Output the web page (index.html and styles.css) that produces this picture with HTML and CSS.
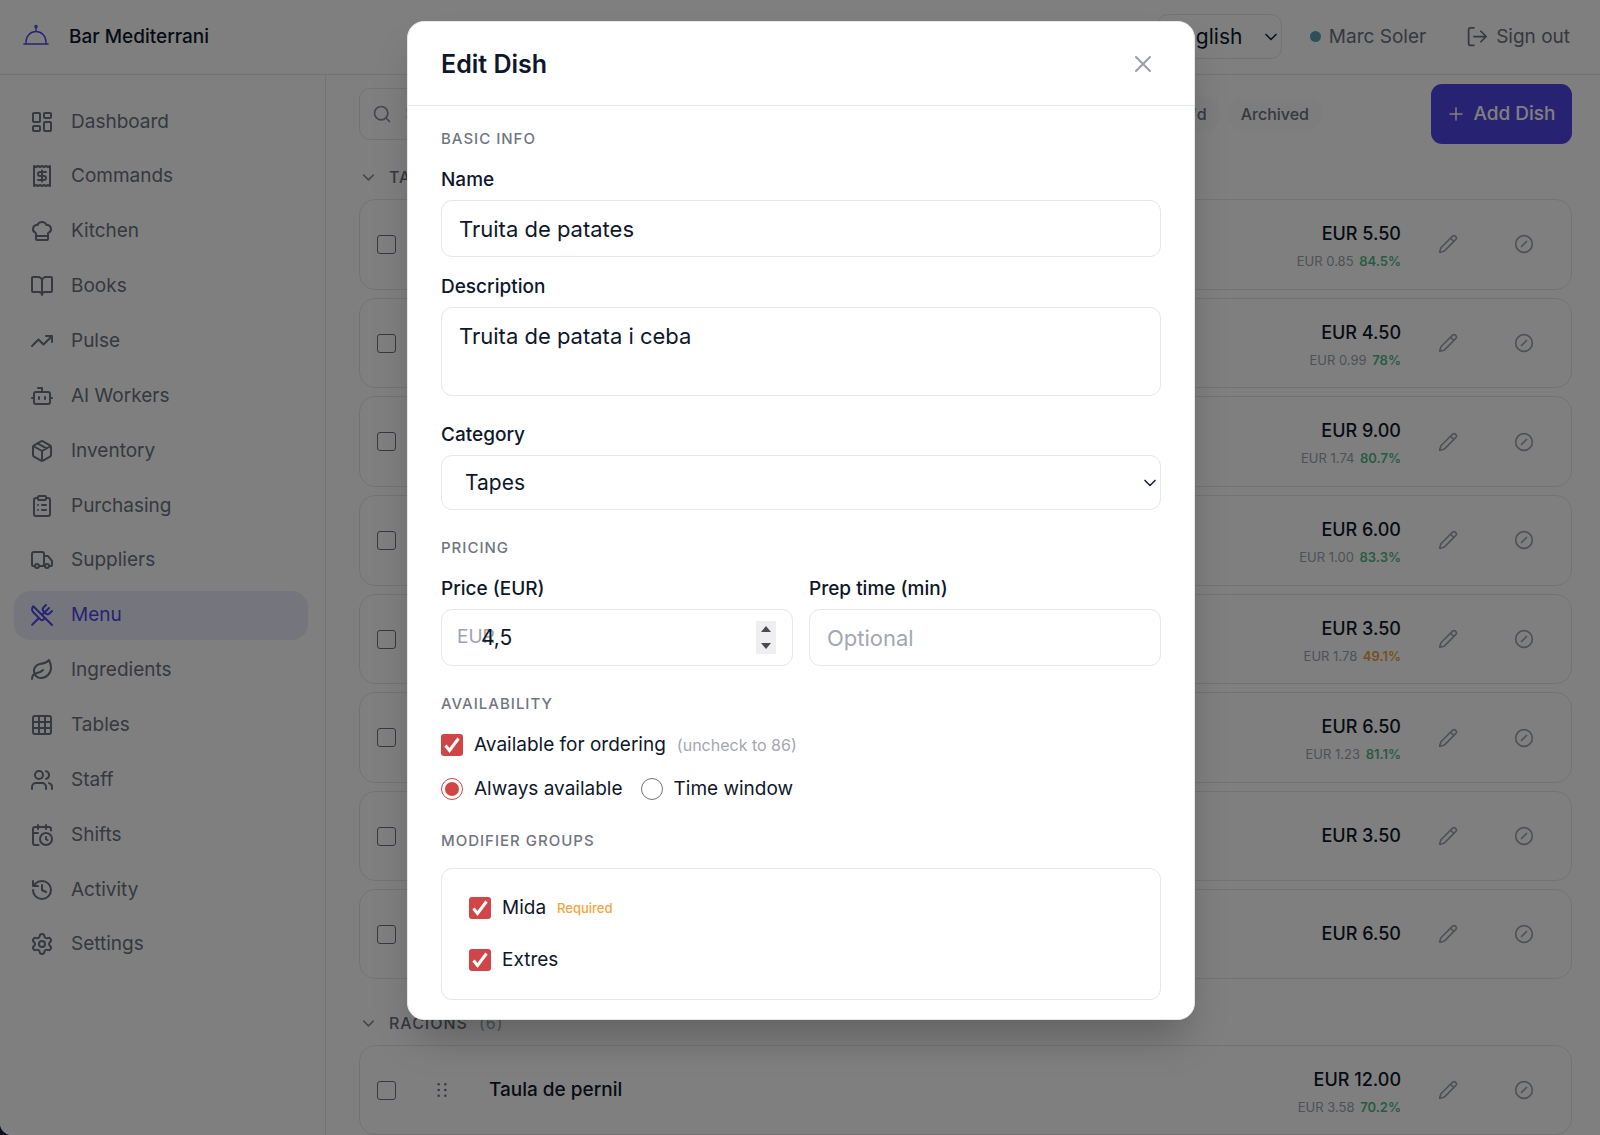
FILE: index.html
```
<!DOCTYPE html>
<html lang="en">
<head>
	<meta charset="utf-8">
	<meta name="viewport" content="width=device-width, initial-scale=1">
	<title>Bar Mediterrani</title>
	<link rel="stylesheet" href="styles.css">
</head>
<body>
<!-- icon sprite -->
<svg class="sprite" xmlns="http://www.w3.org/2000/svg">
	<symbol id="i-cloche" viewBox="0 0 24 24"><path d="M0.8 18.4h22.4M2.8 18v-1.5a9.2 9.6 0 0 1 18.4 0V18M12 7V3"/><circle cx="12" cy="2.4" r="1"/></symbol>
	<symbol id="i-dashboard" viewBox="0 0 24 24"><rect x="3" y="3" width="7" height="9" rx="1"/><rect x="14" y="3" width="7" height="5" rx="1"/><rect x="14" y="12" width="7" height="9" rx="1"/><rect x="3" y="16" width="7" height="5" rx="1"/></symbol>
	<symbol id="i-receipt" viewBox="0 0 24 24"><path d="M4 2v20l2-1 2 1 2-1 2 1 2-1 2 1 2-1 2 1V2l-2 1-2-1-2 1-2-1-2 1-2-1-2 1Z"/><path d="M16 8h-6a2 2 0 1 0 0 4h4a2 2 0 1 1 0 4H8M12 17.5v-11"/></symbol>
	<symbol id="i-chef" viewBox="0 0 24 24"><path d="M17 21a1 1 0 0 0 1-1v-5.35c0-.457.316-.844.727-1.041a4 4 0 0 0-2.134-7.589 5 5 0 0 0-9.186 0 4 4 0 0 0-2.134 7.588c.411.198.727.585.727 1.041V20a1 1 0 0 0 1 1ZM6 17h12"/></symbol>
	<symbol id="i-book" viewBox="0 0 24 24"><path d="M12 7v14M3 18a1 1 0 0 1-1-1V4a1 1 0 0 1 1-1h5a4 4 0 0 1 4 4 4 4 0 0 1 4-4h5a1 1 0 0 1 1 1v13a1 1 0 0 1-1 1h-6a3 3 0 0 0-3 3 3 3 0 0 0-3-3z"/></symbol>
	<symbol id="i-pulse" viewBox="0 0 24 24"><path d="M16 7h6v6M22 7l-8.5 8.5-5-5L2 17"/></symbol>
	<symbol id="i-bot" viewBox="0 0 24 24"><path d="M12 8V4H8M2 14h2M20 14h2M15 13v2M9 13v2"/><rect x="4" y="8" width="16" height="12" rx="2"/></symbol>
	<symbol id="i-package" viewBox="0 0 24 24"><path d="M11 21.73a2 2 0 0 0 2 0l7-4A2 2 0 0 0 21 16V8a2 2 0 0 0-1-1.73l-7-4a2 2 0 0 0-2 0l-7 4A2 2 0 0 0 3 8v8a2 2 0 0 0 1 1.73zM12 22V12M3.29 7 12 12l8.71-5M7.5 4.27l9 5.15"/></symbol>
	<symbol id="i-clipboard" viewBox="0 0 24 24"><rect x="8" y="2" width="8" height="4" rx="1"/><path d="M16 4h2a2 2 0 0 1 2 2v14a2 2 0 0 1-2 2H6a2 2 0 0 1-2-2V6a2 2 0 0 1 2-2h2M12 11h4M12 16h4M8 11h.01M8 16h.01"/></symbol>
	<symbol id="i-truck" viewBox="0 0 24 24"><path d="M14 18V6a2 2 0 0 0-2-2H4a2 2 0 0 0-2 2v11a1 1 0 0 0 1 1h2M15 18H9M19 18h2a1 1 0 0 0 1-1v-3.65a1 1 0 0 0-.22-.624l-3.48-4.35A1 1 0 0 0 17.52 8H14"/><circle cx="17" cy="18" r="2"/><circle cx="7" cy="18" r="2"/></symbol>
	<symbol id="i-menu" viewBox="0 0 24 24"><path d="m16 2-2.3 2.3a3 3 0 0 0 0 4.2l1.8 1.8a3 3 0 0 0 4.2 0L22 8M15 15 3.3 3.3a4.2 4.2 0 0 0 0 6l7.3 7.3c.7.7 2 .7 2.8 0L15 15Zm0 0 7 7M2.1 21.8l6.4-6.3M19 5l-7 7"/></symbol>
	<symbol id="i-leaf" viewBox="0 0 24 24"><path d="M11 20A7 7 0 0 1 9.8 6.1C15.5 5 17 4.48 19 2c1 2 2 4.18 2 8 0 5.5-4.78 10-10 10Z"/><path d="M2 21c0-3 1.85-5.36 5.08-6C9.5 14.52 12 13 13 12"/></symbol>
	<symbol id="i-grid" viewBox="0 0 24 24"><rect x="3" y="3" width="18" height="18" rx="2"/><path d="M3 9h18M3 15h18M9 3v18M15 3v18"/></symbol>
	<symbol id="i-users" viewBox="0 0 24 24"><path d="M16 21v-2a4 4 0 0 0-4-4H6a4 4 0 0 0-4 4v2M16 3.128a4 4 0 0 1 0 7.744M22 21v-2a4 4 0 0 0-3-3.87"/><circle cx="9" cy="7" r="4"/></symbol>
	<symbol id="i-shifts" viewBox="0 0 24 24"><path d="M16 14v2.2l1.6 1M16 2v4M21 7.5V6a2 2 0 0 0-2-2H5a2 2 0 0 0-2 2v14a2 2 0 0 0 2 2h3.5M3 10h5M8 2v4"/><circle cx="16" cy="16" r="6"/></symbol>
	<symbol id="i-history" viewBox="0 0 24 24"><path d="M3 12a9 9 0 1 0 9-9 9.75 9.75 0 0 0-6.74 2.74L3 8M3 3v5h5M12 7v5l4 2"/></symbol>
	<symbol id="i-settings" viewBox="0 0 24 24"><path d="M9.671 4.136a2.34 2.34 0 0 1 4.659 0 2.34 2.34 0 0 0 3.319 1.915 2.34 2.34 0 0 1 2.33 4.033 2.34 2.34 0 0 0 0 3.831 2.34 2.34 0 0 1-2.33 4.033 2.34 2.34 0 0 0-3.319 1.915 2.34 2.34 0 0 1-4.659 0 2.34 2.34 0 0 0-3.32-1.915 2.34 2.34 0 0 1-2.33-4.033 2.34 2.34 0 0 0 0-3.831A2.34 2.34 0 0 1 6.35 6.051a2.34 2.34 0 0 0 3.319-1.915"/><circle cx="12" cy="12" r="3"/></symbol>
	<symbol id="i-search" viewBox="0 0 24 24"><circle cx="11" cy="11" r="8"/><path d="m21 21-4.3-4.3"/></symbol>
	<symbol id="i-chevron" viewBox="0 0 24 24"><path d="m6 9 6 6 6-6"/></symbol>
	<symbol id="i-plus" viewBox="0 0 24 24"><path d="M4 12h16M12 4v16"/></symbol>
	<symbol id="i-close" viewBox="0 0 24 24"><path d="M5 5l14 14M19 5 5 19"/></symbol>
	<symbol id="i-logout" viewBox="0 0 24 24"><path d="M9 2H5a2 2 0 0 0-2 2v16a2 2 0 0 0 2 2h4M9 12h14M17 6l6 6-6 6"/></symbol>
	<symbol id="i-pencil" viewBox="0 0 24 24"><path d="M21.174 6.812a1 1 0 0 0-3.986-3.987L3.842 16.174a2 2 0 0 0-.5.83l-1.321 4.352a.5.5 0 0 0 .623.622l4.353-1.32a2 2 0 0 0 .83-.497zM15 5l4 4"/></symbol>
	<symbol id="i-ban" viewBox="0 0 24 24"><circle cx="12" cy="12" r="10"/><path d="m9 15 6-6"/></symbol>
	<symbol id="i-grip" viewBox="0 0 24 24"><path d="M8 5h.01M8 12h.01M8 19h.01M16 5h.01M16 12h.01M16 19h.01"/></symbol>
</svg>

<div class="app">
	<header class="topbar">
		<a href="#" class="brand"><svg class="brand-icon"><use href="#i-cloche"/></svg>Bar Mediterrani</a>
		<div class="top-right">
			<div class="lang">
				<select aria-label="Language"><option>English</option></select>
				<svg class="arrow"><use href="#i-chevron"/></svg>
			</div>
			<div class="user"><span class="dot"></span>Marc Soler</div>
			<button type="button" class="signout"><svg><use href="#i-logout"/></svg>Sign out</button>
		</div>
	</header>

	<div class="layout">
		<nav class="sidebar">
			<ul class="nav">
				<li><a href="#"><svg><use href="#i-dashboard"/></svg>Dashboard</a></li>
				<li><a href="#"><svg><use href="#i-receipt"/></svg>Commands</a></li>
				<li><a href="#"><svg><use href="#i-chef"/></svg>Kitchen</a></li>
				<li><a href="#"><svg><use href="#i-book"/></svg>Books</a></li>
				<li><a href="#"><svg><use href="#i-pulse"/></svg>Pulse</a></li>
				<li><a href="#"><svg><use href="#i-bot"/></svg>AI Workers</a></li>
				<li><a href="#"><svg><use href="#i-package"/></svg>Inventory</a></li>
				<li><a href="#"><svg><use href="#i-clipboard"/></svg>Purchasing</a></li>
				<li><a href="#"><svg><use href="#i-truck"/></svg>Suppliers</a></li>
				<li><a href="#" class="active"><svg><use href="#i-menu"/></svg>Menu</a></li>
				<li><a href="#"><svg><use href="#i-leaf"/></svg>Ingredients</a></li>
				<li><a href="#"><svg><use href="#i-grid"/></svg>Tables</a></li>
				<li><a href="#"><svg><use href="#i-users"/></svg>Staff</a></li>
				<li><a href="#"><svg><use href="#i-shifts"/></svg>Shifts</a></li>
				<li><a href="#"><svg><use href="#i-history"/></svg>Activity</a></li>
				<li><a href="#"><svg><use href="#i-settings"/></svg>Settings</a></li>
			</ul>
		</nav>

		<main class="content">
			<div class="toolbar">
				<div class="search">
					<svg><use href="#i-search"/></svg>
					<input type="text" placeholder="Search" aria-label="Search">
				</div>
				<div class="filters">
					<button type="button" class="pill">86'd</button>
					<button type="button" class="pill">Archived</button>
				</div>
				<button type="button" class="add-dish"><svg><use href="#i-plus"/></svg>Add Dish</button>
			</div>

			<h2 class="group-title"><svg><use href="#i-chevron"/></svg>TAPES</h2>
			<ul class="dishes tapes">
				<li class="dish">
					<input type="checkbox" class="pick" aria-label="Select dish">
					<div class="cost"><b>EUR 5.50</b><small>EUR 0.85 <em>84.5%</em></small></div>
					<button type="button" class="act" aria-label="Edit"><svg><use href="#i-pencil"/></svg></button>
					<button type="button" class="act" aria-label="Disable"><svg><use href="#i-ban"/></svg></button>
				</li>
				<li class="dish">
					<input type="checkbox" class="pick" aria-label="Select dish">
					<div class="cost"><b>EUR 4.50</b><small>EUR 0.99 <em>78%</em></small></div>
					<button type="button" class="act" aria-label="Edit"><svg><use href="#i-pencil"/></svg></button>
					<button type="button" class="act" aria-label="Disable"><svg><use href="#i-ban"/></svg></button>
				</li>
				<li class="dish">
					<input type="checkbox" class="pick" aria-label="Select dish">
					<div class="cost"><b>EUR 9.00</b><small>EUR 1.74 <em>80.7%</em></small></div>
					<button type="button" class="act" aria-label="Edit"><svg><use href="#i-pencil"/></svg></button>
					<button type="button" class="act" aria-label="Disable"><svg><use href="#i-ban"/></svg></button>
				</li>
				<li class="dish">
					<input type="checkbox" class="pick" aria-label="Select dish">
					<div class="cost"><b>EUR 6.00</b><small>EUR 1.00 <em>83.3%</em></small></div>
					<button type="button" class="act" aria-label="Edit"><svg><use href="#i-pencil"/></svg></button>
					<button type="button" class="act" aria-label="Disable"><svg><use href="#i-ban"/></svg></button>
				</li>
				<li class="dish">
					<input type="checkbox" class="pick" aria-label="Select dish">
					<div class="cost"><b>EUR 3.50</b><small>EUR 1.78 <em class="low">49.1%</em></small></div>
					<button type="button" class="act" aria-label="Edit"><svg><use href="#i-pencil"/></svg></button>
					<button type="button" class="act" aria-label="Disable"><svg><use href="#i-ban"/></svg></button>
				</li>
				<li class="dish">
					<input type="checkbox" class="pick" aria-label="Select dish">
					<div class="cost"><b>EUR 6.50</b><small>EUR 1.23 <em>81.1%</em></small></div>
					<button type="button" class="act" aria-label="Edit"><svg><use href="#i-pencil"/></svg></button>
					<button type="button" class="act" aria-label="Disable"><svg><use href="#i-ban"/></svg></button>
				</li>
				<li class="dish">
					<input type="checkbox" class="pick" aria-label="Select dish">
					<div class="cost"><b>EUR 3.50</b></div>
					<button type="button" class="act" aria-label="Edit"><svg><use href="#i-pencil"/></svg></button>
					<button type="button" class="act" aria-label="Disable"><svg><use href="#i-ban"/></svg></button>
				</li>
				<li class="dish">
					<input type="checkbox" class="pick" aria-label="Select dish">
					<div class="cost"><b>EUR 6.50</b></div>
					<button type="button" class="act" aria-label="Edit"><svg><use href="#i-pencil"/></svg></button>
					<button type="button" class="act" aria-label="Disable"><svg><use href="#i-ban"/></svg></button>
				</li>
			</ul>

			<h2 class="group-title second"><svg><use href="#i-chevron"/></svg>RACIONS <span>(6)</span></h2>
			<ul class="dishes">
				<li class="dish">
					<input type="checkbox" class="pick" aria-label="Select Taula de pernil">
					<svg class="grip"><use href="#i-grip"/></svg>
					<span class="dish-name">Taula de pernil</span>
					<div class="cost"><b>EUR 12.00</b><small>EUR 3.58 <em>70.2%</em></small></div>
					<button type="button" class="act" aria-label="Edit"><svg><use href="#i-pencil"/></svg></button>
					<button type="button" class="act" aria-label="Disable"><svg><use href="#i-ban"/></svg></button>
				</li>
			</ul>
		</main>
	</div>

	<div class="overlay">
		<form class="modal" role="dialog" aria-labelledby="modal-title">
			<div class="modal-head">
				<h1 id="modal-title">Edit Dish</h1>
				<button type="button" class="close" aria-label="Close"><svg><use href="#i-close"/></svg></button>
			</div>
			<div class="modal-body">
				<section>
					<h3>BASIC INFO</h3>
					<div class="field">
						<label for="name">Name</label>
						<input type="text" id="name" class="control" value="Truita de patates">
					</div>
					<div class="field">
						<label for="desc">Description</label>
						<textarea id="desc" class="control">Truita de patata i ceba</textarea>
					</div>
					<div class="field category">
						<label for="cat">Category</label>
						<div class="select-wrap">
							<select id="cat" class="control"><option>Tapes</option></select>
							<svg class="arrow"><use href="#i-chevron"/></svg>
						</div>
					</div>
				</section>
				<section>
					<h3>PRICING</h3>
					<div class="cols">
						<div class="field">
							<label for="price">Price (EUR)</label>
							<div class="price-wrap">
								<span class="prefix">EUR</span>
								<input type="text" inputmode="decimal" id="price" class="control price" value="4,5">
								<span class="spin">
									<button type="button" class="up" aria-label="Increase"></button>
									<button type="button" class="down" aria-label="Decrease"></button>
								</span>
							</div>
						</div>
						<div class="field">
							<label for="prep">Prep time (min)</label>
							<input type="text" id="prep" class="control" placeholder="Optional">
						</div>
					</div>
				</section>
				<section>
					<h3>AVAILABILITY</h3>
					<label class="check"><input type="checkbox" checked>Available for ordering <span class="hint">(uncheck to 86)</span></label>
					<div class="radios">
						<label class="check"><input type="radio" name="when" checked>Always available</label>
						<label class="check"><input type="radio" name="when">Time window</label>
					</div>
				</section>
				<section>
					<h3>MODIFIER GROUPS</h3>
					<div class="modifiers">
						<label class="check"><input type="checkbox" checked>Mida <span class="required">Required</span></label>
						<label class="check"><input type="checkbox" checked>Extres</label>
					</div>
				</section>
			</div>
		</form>
	</div>
</div>
</body>
</html>
```
FILE: styles.css
```
*{
	margin: 0;
	padding: 0;
	box-sizing: border-box;
	list-style: none;
}
html{
	background: #0b0f1e;
}
body{
	font-family: Inter, "Liberation Sans", sans-serif;
	font-size: 19px;
	line-height: 28px;
	color: #0f172a;
}
a{
	color: inherit;
	text-decoration: none;
}
button, input, select, textarea{
	font: inherit;
	color: inherit;
	border: none;
	background: none;
	outline: none;
}
button{
	cursor: pointer;
}
svg{
	width: 24px;
	height: 24px;
	fill: none;
	stroke: currentColor;
	stroke-width: 2;
	stroke-linecap: round;
	stroke-linejoin: round;
	flex: none;
	display: block;
}
.sprite{
	position: absolute;
	width: 0;
	height: 0;
}
.app{
	position: relative;
	display: flex;
	flex-direction: column;
	height: 100vh;
	overflow: hidden;
	background: #fff;
	border-bottom-left-radius: 12px;
}

/* top bar */
.topbar{
	display: flex;
	align-items: center;
	justify-content: space-between;
	flex: none;
	height: 75px;
	padding: 0 30px 1px 23px;
	border-bottom: 1px solid #e5e7eb;
}
.brand{
	display: flex;
	align-items: center;
	gap: 20px;
	font-weight: 500;
}
.brand-icon{
	width: 26px;
	height: 26px;
	color: #4f46e5;
	stroke-width: 1.3;
}
.top-right{
	display: flex;
	align-items: center;
	color: #6b7280;
}
.lang{
	position: relative;
	margin-right: 28px;
}
.lang select{
	appearance: none;
	width: 125px;
	height: 45px;
	padding-left: 13px;
	border: 1px solid #e5e7eb;
	border-radius: 11px;
	font-size: 21px;
	color: #0f172a;
}
.arrow{
	position: absolute;
	right: 1px;
	top: 50%;
	width: 20px;
	height: 20px;
	margin-top: -10px;
	color: #1f2937;
	pointer-events: none;
}
.user{
	display: flex;
	align-items: center;
	gap: 8px;
	margin-right: 40px;
}
.dot{
	width: 11px;
	height: 11px;
	border-radius: 50%;
	background: #5b9fb5;
}
.signout{
	display: flex;
	align-items: center;
	gap: 9px;
}
.signout svg{
	width: 21px;
	height: 21px;
}

/* sidebar */
.layout{
	display: flex;
	flex: 1;
	min-height: 0;
}
.sidebar{
	flex: none;
	width: 326px;
	padding: 22px 17px 0 14px;
	border-right: 1px solid #e5e7eb;
	color: #6b7280;
}
.nav{
	display: flex;
	flex-direction: column;
	justify-content: space-between;
	min-height: 872px;
}
.nav a{
	display: flex;
	align-items: center;
	gap: 17px;
	height: 49px;
	padding-left: 16px;
	border-radius: 16px;
}
.nav a.active{
	background: #ebebfa;
	color: #4f46e5;
}

/* dish list */
.content{
	flex: 1;
	min-width: 0;
	padding: 9px 28px 0 33px;
}
.toolbar{
	display: flex;
	align-items: center;
	gap: 16px;
}
.search{
	display: flex;
	align-items: center;
	flex: 1;
	gap: 13px;
	height: 52px;
	padding: 0 12px;
	border: 1px solid #e5e7eb;
	border-radius: 11px;
	color: #8a909c;
}
.search svg{
	width: 20px;
	height: 20px;
}
.search input{
	flex: 1;
	min-width: 0;
}
.search input::placeholder{
	color: #9ca3af;
}
.filters{
	display: flex;
	gap: 6px;
	margin-right: 92px;
}
.pill{
	height: 34px;
	padding: 0 14px;
	border-radius: 17px;
	background: #fafafa;
	font-size: 16px;
	font-weight: 500;
	color: #6b7280;
}
.add-dish{
	display: flex;
	align-items: center;
	justify-content: center;
	gap: 8px;
	width: 141px;
	height: 60px;
	border-radius: 11px;
	background: #4f46e5;
	font-weight: 500;
	color: #fff;
}
.add-dish svg{
	width: 18px;
	height: 18px;
}
.group-title{
	display: flex;
	align-items: center;
	gap: 11px;
	height: 20px;
	margin: 23px 0 12px;
	font-size: 16px;
	font-weight: 500;
	letter-spacing: 1px;
	color: #6b7280;
}
.group-title.second{
	margin: 34px 0 12px;
}
.group-title svg{
	width: 19px;
	height: 19px;
	color: #8a909c;
}
.group-title span{
	font-weight: 400;
	color: #9ca3af;
}
.dishes{
	display: flex;
	flex-direction: column;
	gap: 8px;
}
.tapes{
	min-height: 780px;
}
.dish{
	display: flex;
	align-items: center;
	flex: 1 0 auto;
	min-height: 90px;
	padding: 0 28px 0 17px;
	border: 1px solid #e5e7eb;
	border-radius: 16px;
}
.pick{
	appearance: none;
	width: 19px;
	height: 19px;
	border: 1px solid #6b7280;
	border-radius: 3px;
}
.grip{
	width: 20px;
	height: 20px;
	margin-left: 36px;
	color: #6b7280;
	stroke-width: 3;
}
.dish-name{
	margin-left: 37px;
	font-weight: 500;
}
.cost{
	display: flex;
	flex-direction: column;
	align-items: flex-end;
	margin-left: auto;
	margin-right: 28px;
}
.cost b{
	font-size: 18px;
	line-height: 34px;
	font-weight: 500;
}
.cost small{
	font-size: 13px;
	line-height: 21px;
	color: #9ca3af;
}
.cost em{
	margin-left: 2px;
	font-style: normal;
	font-weight: 600;
	color: #52b788;
}
.cost em.low{
	color: #e9a23b;
}
.act{
	width: 38px;
	height: 38px;
	color: #9ca3af;
}
.act + .act{
	margin-left: 38px;
}
.act svg{
	width: 20px;
	height: 20px;
	margin: 0 auto;
}

/* edit dialog */
.overlay{
	position: absolute;
	inset: 0;
	padding: 21px 0 0 2px;
	background: rgba(0,0,0,.5);
}
.modal{
	width: 788px;
	max-width: 100%;
	margin: 0 auto;
	border-radius: 17px;
	background: #fff;
	border: 1px solid #e5e7eb;
	box-shadow: 0 25px 40px -10px rgba(0,0,0,.25);
}
.modal-head{
	display: flex;
	align-items: center;
	justify-content: space-between;
	height: 84px;
	padding: 0 39px 0 33px;
	border-bottom: 1px solid #e5e7eb;
}
.modal-head h1{
	font-size: 25px;
	font-weight: 600;
}
.close{
	color: #9a9ea8;
}
.modal-body{
	display: flex;
	flex-direction: column;
	gap: 28px;
	padding: 23px 33px 19px;
}
h3{
	margin-bottom: 17px;
	font-size: 15px;
	line-height: 20px;
	font-weight: 500;
	letter-spacing: 1px;
	color: #71757f;
}
.field label{
	display: block;
	margin-bottom: 6px;
	font-weight: 500;
}
.field + .field{
	margin-top: 16px;
}
.field + .category{
	margin-top: 25px;
}
.control{
	display: block;
	width: 100%;
	height: 57px;
	padding: 0 17px;
	border: 1px solid #e5e7eb;
	border-radius: 11px;
	font-size: 22px;
}
.control::placeholder{
	color: #a3a7b0;
}
textarea.control{
	height: 89px;
	padding-top: 14px;
	resize: none;
}
select.control{
	appearance: none;
	height: 55px;
	padding-left: 23px;
	font-size: 21px;
}
.select-wrap, .price-wrap{
	position: relative;
}
.cols{
	display: grid;
	grid-template-columns: 1fr 1fr;
	gap: 16px;
}
.cols .field + .field{
	margin-top: 0;
}
.prefix{
	position: absolute;
	left: 16px;
	top: 14px;
	color: #9ca3af;
}
.control.price{
	position: relative;
	padding-left: 39px;
	font-size: 21px;
}
.spin{
	position: absolute;
	right: 17px;
	top: 12px;
	display: flex;
	flex-direction: column;
	width: 20px;
	height: 33px;
	background: #efeff2;
}
.spin button{
	display: flex;
	align-items: center;
	justify-content: center;
	flex: 1;
}
.spin button::before{
	content: "";
	border: 5px solid transparent;
	border-top: none;
	border-bottom: 6px solid #4b4b4f;
}
.spin .down::before{
	border-bottom: none;
	border-top: 6px solid #4b4b4f;
}
.check{
	display: flex;
	align-items: center;
	gap: 11px;
}
.check input{
	appearance: none;
	flex: none;
	width: 22px;
	height: 22px;
}
.check input[type=checkbox]{
	border-radius: 3px;
	background: #d04545 url("data:image/svg+xml,%3Csvg xmlns='http://www.w3.org/2000/svg' viewBox='0 0 22 22'%3E%3Cpath d='M4.5 11.5l4 5 9-12' fill='none' stroke='white' stroke-width='3'/%3E%3C/svg%3E");
}
.check input[type=radio]{
	border: 1px solid #767676;
	border-radius: 50%;
}
.check input[type=radio]:checked{
	border-color: #d04545;
	background: #d04545;
	background-clip: content-box;
	padding: 3px;
}
.hint{
	font-size: 16px;
	color: #a3a7b0;
}
.radios{
	display: flex;
	gap: 18px;
	margin-top: 16px;
}
.modifiers{
	padding: 13px 27px;
	border: 1px solid #e5e7eb;
	border-radius: 11px;
}
.modifiers .check{
	height: 52px;
}
.required{
	font-size: 13px;
	font-weight: 500;
	color: #f0a63c;
}
```
